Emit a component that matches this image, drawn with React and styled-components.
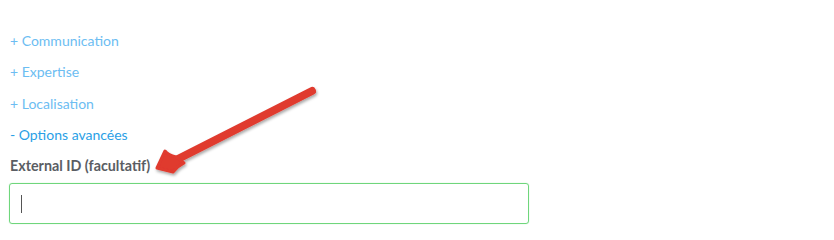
import React from 'react';
import styled, { createGlobalStyle } from 'styled-components';

const GlobalStyle = createGlobalStyle`
  html, body {
    margin: 0;
    padding: 0;
    background: #fff;
  }
  body {
    font-family: 'Lato', 'Open Sans', sans-serif;
  }
`;

const Page = styled.div`
  position: relative;
  width: 834px;
  height: 233px;
  overflow: hidden;
  padding: 32px 0 0 10px;
  box-sizing: border-box;
`;

const Toggles = styled.div`
  display: flex;
  flex-direction: column;
  gap: 13.4px;
`;

const Toggle = styled.a`
  font-size: 14px;
  line-height: 18px;
  color: ${(p) => (p.open ? '#2a9fe6' : '#6cbdf2')};
  cursor: pointer;
  text-decoration: none;
`;

const Field = styled.div`
  display: flex;
  flex-direction: column;
  margin-top: 13px;
`;

const Label = styled.label`
  font-size: 14.3px;
  font-weight: 700;
  color: #5a5d63;
  line-height: 18px;
  margin-bottom: 8px;
`;

const Input = styled.div`
  width: 520px;
  height: 41px;
  margin-left: -1px;
  box-sizing: border-box;
  border: 1px solid #6fd67c;
  box-shadow: 0 0 1px #9be6a4;
  border-radius: 3px;
  display: flex;
  align-items: center;
  padding-left: 11px;
`;

const Caret = styled.span`
  width: 1px;
  height: 18px;
  background: #555;
`;

const Arrow = styled.svg`
  position: absolute;
  left: 0;
  top: 0;
  pointer-events: none;
`;

export default function App() {
  return (
    <>
      <GlobalStyle />
      <Page>
        <Toggles>
          <Toggle>+ Communication</Toggle>
          <Toggle>+ Expertise</Toggle>
          <Toggle>+ Localisation</Toggle>
          <Toggle open>- Options avancées</Toggle>
        </Toggles>
        <Field>
          <Label>External ID (facultatif)</Label>
          <Input>
            <Caret />
          </Input>
        </Field>
        <Arrow width="834" height="233" viewBox="0 0 834 233">
          <defs>
            <filter id="sh" x="-20%" y="-20%" width="140%" height="140%">
              <feDropShadow dx="1" dy="2" stdDeviation="1.5" floodColor="#000" floodOpacity="0.35" />
            </filter>
          </defs>
          <g filter="url(#sh)">
            <line x1="312" y1="91" x2="172" y2="162" stroke="#e03a2f" strokeWidth="8" strokeLinecap="round" />
            <path d="M157 168 L165 151 Q168 155 176 157 L184 163 Q178 166 173 172 Z" fill="#e03a2f" stroke="#e03a2f" strokeWidth="3" strokeLinejoin="round" />
          </g>
        </Arrow>
      </Page>
    </>
  );
}
